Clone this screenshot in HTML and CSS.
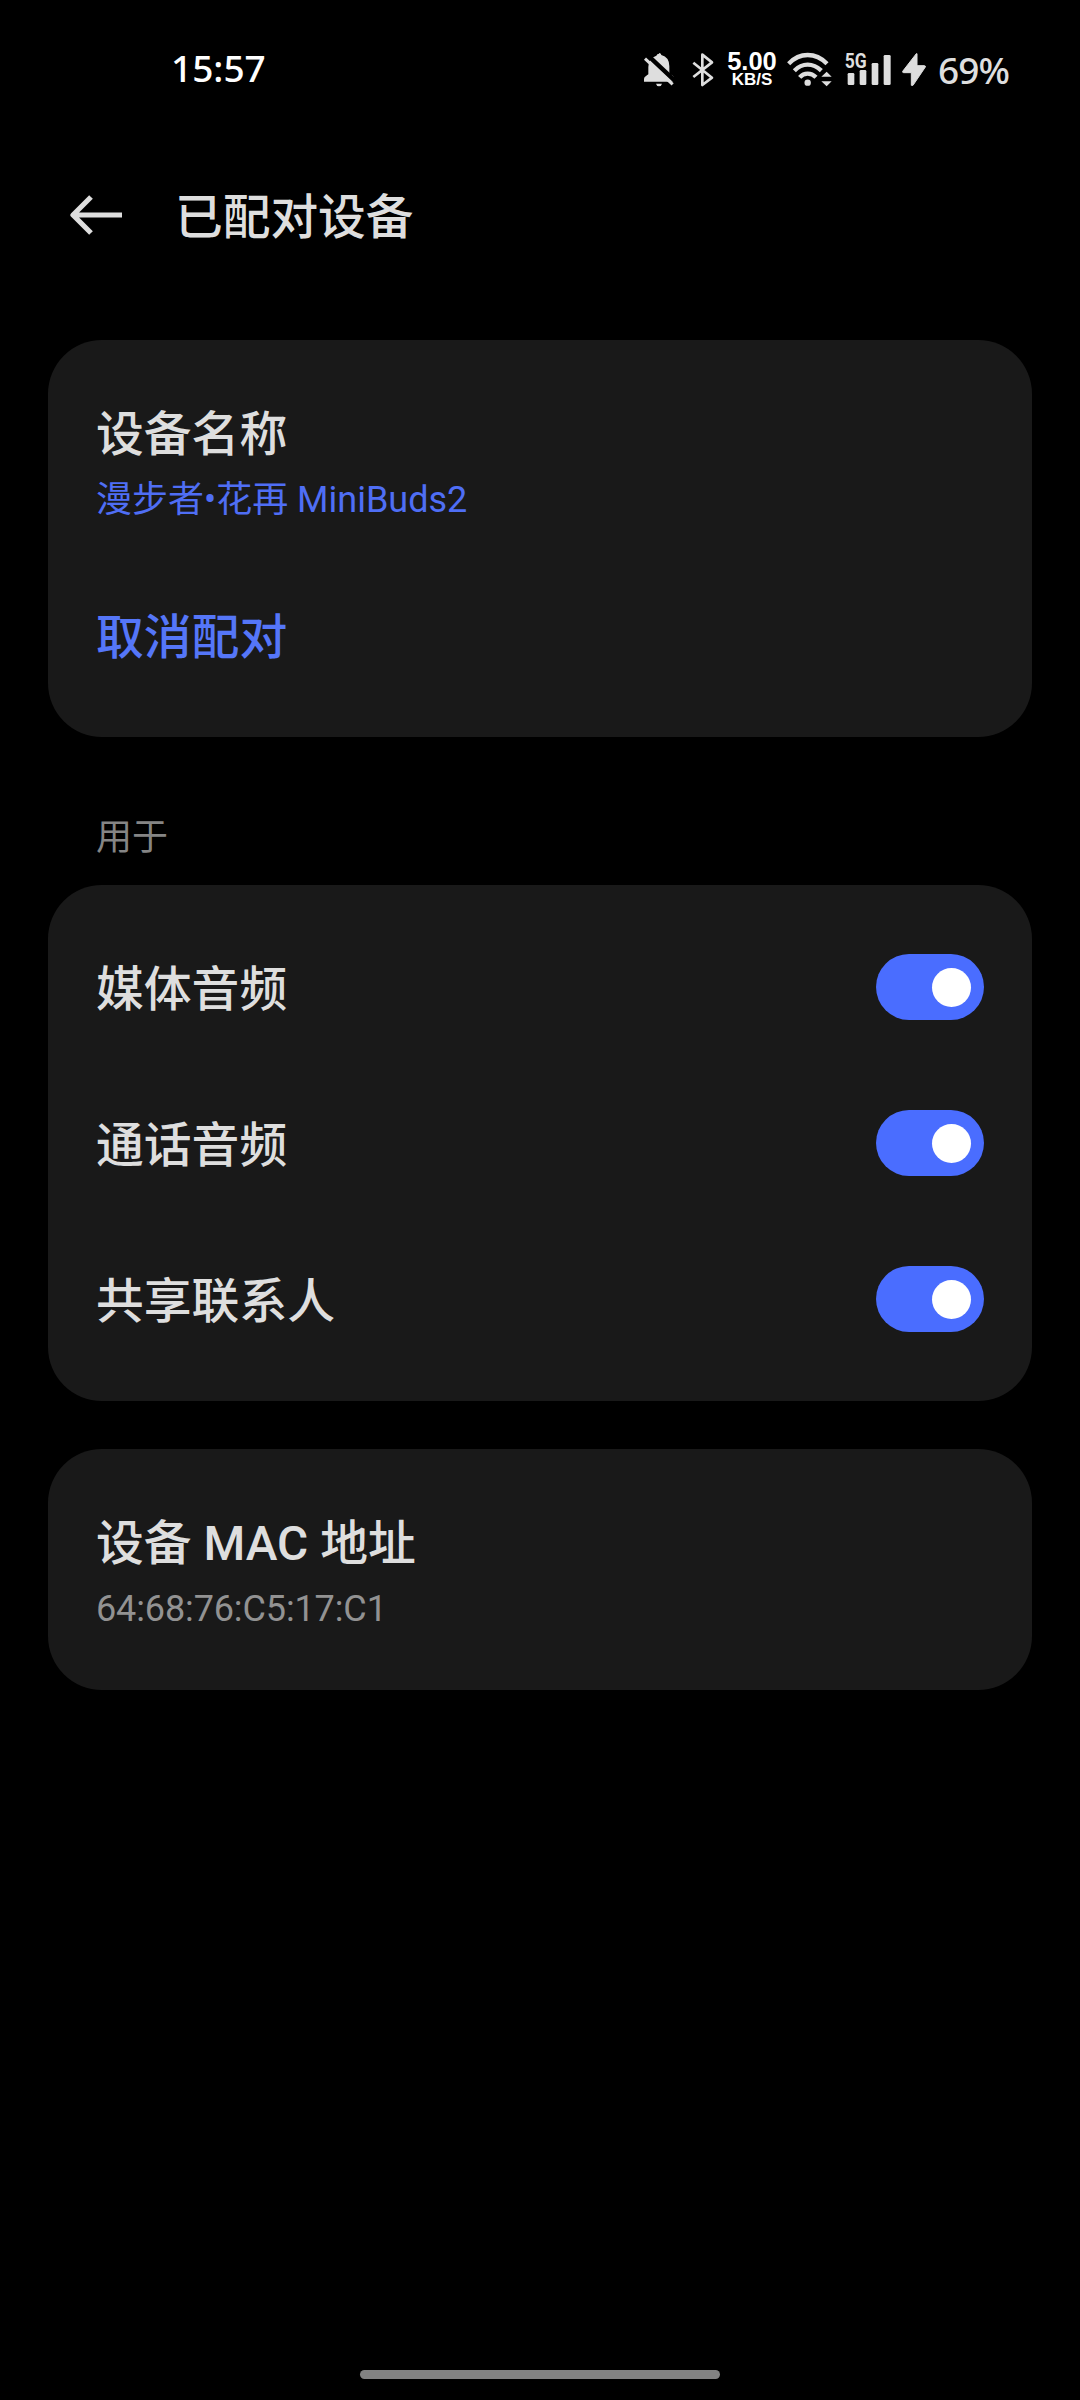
FILE: index.html
```html
<!DOCTYPE html>
<html lang="zh-CN">
<head>
<meta charset="utf-8">
<title>已配对设备</title>
<link rel="stylesheet" href="styles.css">
</head>
<body>
<div class="screen">
  <header class="status">
    <span class="clock">15:57</span>
    <div class="indicators">
      <svg class="bell" width="34" height="37" viewBox="66 60 102 111">
        <path fill="#dedede" d="M117 66q6 0 7 6q24 6 24 34v22l10 6q4 3 4 8v10H72v-8q0-6 6-9l7-5v-22q0-26 24-34q2-6 8-6zM108 158h18q-2 8-9 8t-9-8z"/>
        <path stroke="#000" stroke-width="13" d="M78 68L176 160"/>
        <path fill="#000" d="M66 60H92L84 78L66 78z"/>
        <path stroke="#dedede" stroke-width="9" d="M75 83L158 160"/>
      </svg>
      <svg class="bluetooth" width="24" height="37" viewBox="213 60 72 111">
        <path fill="none" stroke="#dedede" stroke-width="8" stroke-linejoin="round" d="M220 95L276 140L247 162V71L276 94L220 138"/>
      </svg>
      <div class="speed"><span class="rate">5.00</span><span class="unit">KB/S</span></div>
      <svg class="wifi" width="46" height="37" viewBox="500 60 138 111">
        <g fill="none" stroke="#dedede" stroke-width="13">
          <path d="M505 98Q530 72 562 72T620 98"/>
          <path d="M522 119Q540 101 562 101T603 119"/>
          <path d="M538 139Q548 128 562 128T587 139"/>
        </g>
        <circle cx="562" cy="155" r="9.5" fill="#dedede"/>
        <path fill="#dedede" d="M619 122L634 137H603zM619 166L634 151H603z"/>
      </svg>
      <svg class="signal" width="50" height="37" viewBox="70 60 150 111">
        <text class="network" x="75" y="110" textLength="66" lengthAdjust="spacingAndGlyphs">5G</text>
        <g fill="#dedede">
          <rect x="84" y="126" width="20" height="36" rx="4"/>
          <rect x="120" y="117" width="20" height="45" rx="4"/>
          <rect x="156" y="96" width="20" height="66" rx="4"/>
          <rect x="192" y="72" width="21" height="90" rx="4"/>
        </g>
      </svg>
      <svg class="bolt" width="26" height="37" viewBox="243 60 78 111">
        <path fill="#dedede" stroke="#dedede" stroke-width="3" stroke-linejoin="round" d="M289 68L248 121Q247 125 251 125H274V163H279L316 108Q317 104 313 104H291V68z"/>
      </svg>
      <span class="battery">69%</span>
    </div>
  </header>

  <nav class="appbar">
    <svg width="54" height="42" viewBox="70 194 54 42">
      <path fill="none" stroke="#dedede" stroke-width="5.2" stroke-linejoin="round" d="M122 215H74M91 197L73 215L91 233"/>
    </svg>
    <h1 class="heading">已配对设备</h1>
  </nav>

  <main class="content">
    <section class="card">
      <div class="entry">
        <div class="label">设备名称</div>
        <div class="value accent">漫步者•花再 MiniBuds2</div>
      </div>
      <div class="row"><span class="label link">取消配对</span></div>
    </section>

    <h2 class="group">用于</h2>
    <section class="card">
      <div class="row"><span class="label">媒体音频</span><span class="switch"><span class="knob"></span></span></div>
      <div class="row"><span class="label">通话音频</span><span class="switch"><span class="knob"></span></span></div>
      <div class="row"><span class="label">共享联系人</span><span class="switch"><span class="knob"></span></span></div>
    </section>

    <section class="card last">
      <div class="entry">
        <div class="label">设备 MAC 地址</div>
        <div class="value address">64:68:76:C5:17:C1</div>
      </div>
    </section>
  </main>

  <footer class="gesture"><span class="pill"></span></footer>
</div>
</body>
</html>
```
FILE: styles.css
```css
* { box-sizing: border-box; }
body {
  margin: 0;
  background: #000;
  color: #dedede;
  font-family: Roboto, "Noto Sans CJK SC", sans-serif;
}
.screen { width: 1080px; height: 2400px; display: flex; flex-direction: column; }

.status { height: 138px; padding: 0 68px 0 171px; display: flex; justify-content: space-between; align-items: center; }
.clock { padding-bottom: 2px; font: 500 37px/40px "Noto Sans", sans-serif; color: #fff; }
.indicators { display: flex; align-items: center; height: 37px; }
.indicators svg { display: block; flex: none; overflow: visible; }
.bluetooth { margin-left: 15px; }
.speed { width: 58px; margin-left: 8px; display: flex; flex-direction: column; align-items: center; font-family: "Liberation Sans", sans-serif; font-weight: 700; color: #fff; }
.rate { font-size: 25.5px; line-height: 20px; }
.unit { font-size: 17px; line-height: 17px; }
.wifi { margin-left: 6px; }
.signal { margin-left: 10px; }
.network { font: 700 61px Roboto, sans-serif; fill: #dedede; }
.bolt { margin-left: 8px; }
.battery { width: 74px; margin-left: 11px; padding-top: 1px; font: 500 37px/40px "Noto Sans", sans-serif; letter-spacing: -0.9px; white-space: nowrap; }

.appbar { height: 154px; padding-left: 70px; display: flex; align-items: center; gap: 51px; }
.heading { margin: 0; padding-top: 5px; font-size: 47.7px; line-height: 60px; font-weight: 500; }

.content { flex: 1; padding: 48px 48px 0; }
.card { background: #191919; border-radius: 54px; padding: 24px 48px; }
.entry { height: 193px; padding-top: 41px; }
.label { font-size: 47.8px; line-height: 60px; height: 60px; font-weight: 500; }
.value { height: 48px; margin-top: 11px; font-size: 36px; line-height: 48px; color: #929292; }
.address { letter-spacing: -0.12px; }
.accent { color: #4f6ef5; }
.link { color: #5576f8; }
.row { height: 156px; display: flex; align-items: center; justify-content: space-between; }
.row .label { height: 66px; padding-top: 6px; }
.switch { width: 108px; height: 66px; border-radius: 33px; background: #4a6dff; display: flex; align-items: center; justify-content: flex-end; padding-right: 13px; }
.knob { width: 39px; height: 39px; border-radius: 50%; background: #fff; }
.group { margin: 77px 0 0; padding-left: 48px; height: 71px; font-size: 36px; line-height: 48px; font-weight: 400; color: #858585; }
.last { margin-top: 48px; }

.gesture { height: 30px; display: flex; justify-content: center; }
.pill { width: 360px; height: 9px; border-radius: 5px; background: #828282; }
```
